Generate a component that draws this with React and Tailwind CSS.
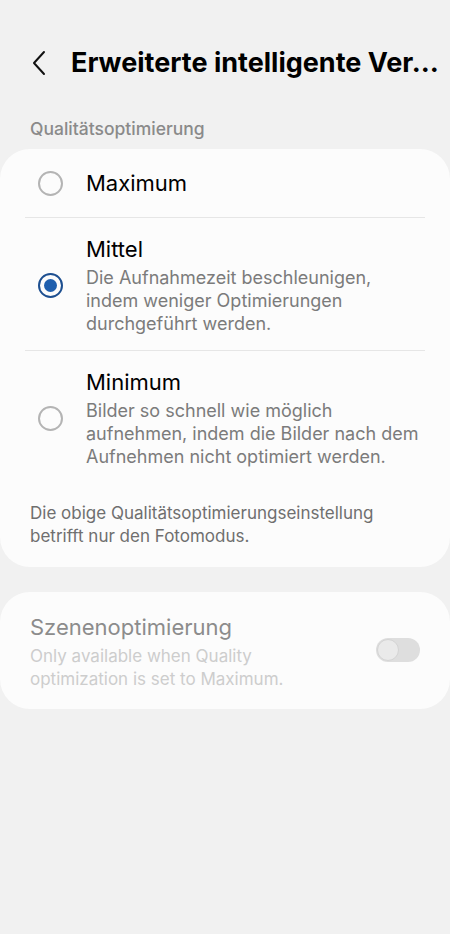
import React from "react";

function Radio({ checked }) {
  if (checked) {
    return (
      <div className="w-[25px] h-[25px] rounded-full border-[2.5px] border-[#1d4f90] flex items-center justify-center shrink-0">
        <div className="w-[13px] h-[13px] rounded-full bg-[#1f5fae]" />
      </div>
    );
  }
  return <div className="w-[25px] h-[25px] rounded-full border-[2px] border-[#b4b4b4] shrink-0" />;
}

export default function App() {
  const font = { fontFamily: "Inter, Roboto, 'Noto Sans', sans-serif" };
  return (
    <div className="min-h-[934px] w-[450px] bg-[#f1f1f1] text-black" style={font}>
      {/* Header */}
      <div className="flex items-center pt-[43px] h-[82px] pl-[30px]">
        <svg width="18" height="28" viewBox="0 0 18 28" className="shrink-0">
          <path d="M14 3 L4 14 L14 25" fill="none" stroke="#111" strokeWidth="2" strokeLinecap="round" strokeLinejoin="round" />
        </svg>
        <div className="ml-[23px] text-[27px] font-bold leading-none whitespace-nowrap">
          Erweiterte intelligente Ver…
        </div>
      </div>

      {/* Section label */}
      <div className="pl-[30px] mt-[36px] text-[17.5px] font-medium text-[#8a8a8a] leading-[22px]">
        Qualitätsoptimierung
      </div>

      {/* Card 1 */}
      <div className="mt-[9px] bg-[#fcfcfc] rounded-[30px] px-[25px] pb-[19px]">
        <div className="flex items-center h-[68px]">
          <div className="w-[50px] flex justify-center"><Radio /></div>
          <div className="ml-[11px] text-[22px] leading-none">Maximum</div>
        </div>
        <div className="h-px bg-[#e6e6e6]" />
        <div className="flex items-center pt-[17px] pb-[15px]">
          <div className="w-[50px] flex justify-center"><Radio checked /></div>
          <div className="ml-[11px]">
            <div className="text-[22px] leading-[28px]">Mittel</div>
            <div className="text-[18px] leading-[23px] text-[#7b7b7b] mt-[3px]">
              Die Aufnahmezeit beschleunigen,<br />indem weniger Optimierungen<br />durchgeführt werden.
            </div>
          </div>
        </div>
        <div className="h-px bg-[#e6e6e6]" />
        <div className="flex items-center pt-[17px]">
          <div className="w-[50px] flex justify-center"><Radio /></div>
          <div className="ml-[11px]">
            <div className="text-[22px] leading-[28px]">Minimum</div>
            <div className="text-[18px] leading-[23px] text-[#7b7b7b] mt-[3px]">
              Bilder so schnell wie möglich<br />aufnehmen, indem die Bilder nach dem<br />Aufnehmen nicht optimiert werden.
            </div>
          </div>
        </div>
        <div className="mt-[34px] pl-[5px] text-[17px] leading-[23px] text-[#6f6f6f]">
          Die obige Qualitätsoptimierungseinstellung<br />betrifft nur den Fotomodus.
        </div>
      </div>

      {/* Card 2 */}
      <div className="mt-[25px] bg-[#fcfcfc] rounded-[30px] pl-[30px] pr-[30px] pt-[21px] pb-[18px] flex items-center">
        <div className="flex-1">
          <div className="text-[22px] leading-[28px] text-[#8c8c8c]">Szenenoptimierung</div>
          <div className="text-[17px] leading-[23px] text-[#cdcdcd] mt-[4px]">
            Only available when Quality<br />optimization is set to Maximum.
          </div>
        </div>
        <div className="w-[44px] h-[24px] rounded-full bg-[#dedede] flex items-center pl-[1px] -mt-[4px]">
          <div className="w-[22px] h-[22px] rounded-full bg-[#eaeaea] border border-[#d4d4d4]" />
        </div>
      </div>
    </div>
  );
}
